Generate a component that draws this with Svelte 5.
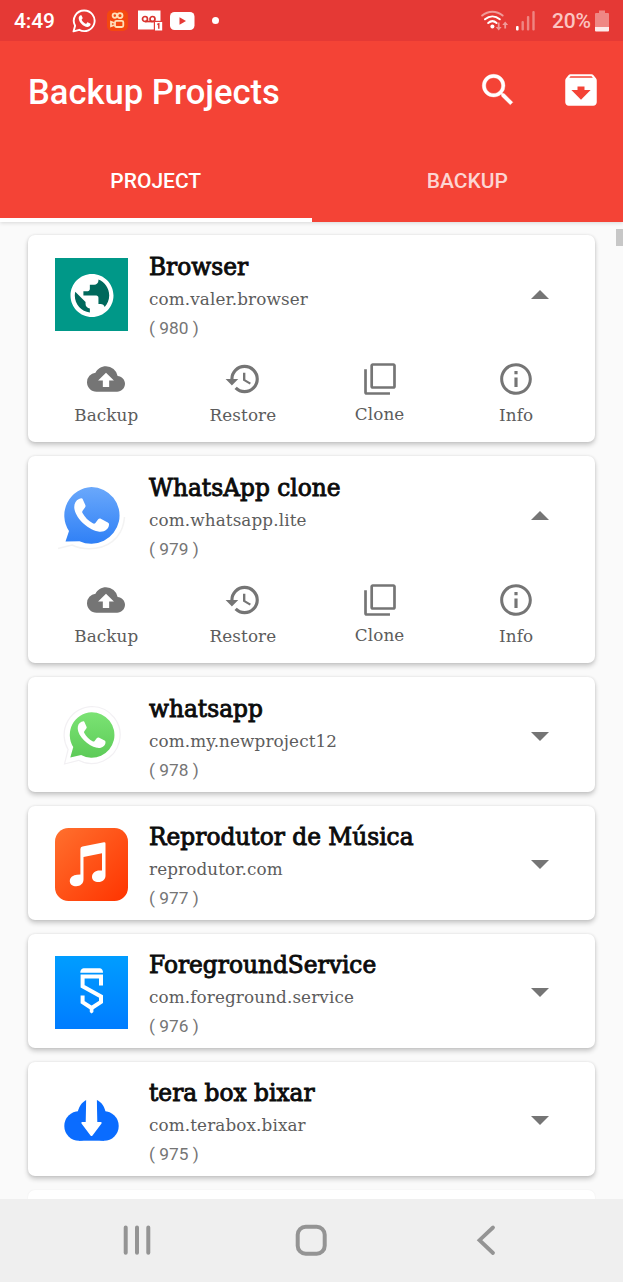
<!--
  App.svelte - Backup Projects screen with the project list
-->
<script lang="ts">
  interface Project {
    id: number;
    name: string;
    pkg: string;
    icon: string;
    open: boolean;
  }

  let projects = $state<Project[]>([
    { id: 980, name: "Browser", pkg: "com.valer.browser", icon: "browser", open: true },
    { id: 979, name: "WhatsApp clone", pkg: "com.whatsapp.lite", icon: "chat-blue", open: true },
    { id: 978, name: "whatsapp", pkg: "com.my.newproject12", icon: "chat-green", open: false },
    { id: 977, name: "Reprodutor de Música", pkg: "reprodutor.com", icon: "music", open: false },
    { id: 976, name: "ForegroundService", pkg: "com.foreground.service", icon: "sketch", open: false },
    { id: 975, name: "tera box bixar", pkg: "com.terabox.bixar", icon: "tera", open: false },
  ]);

  const actions = [
    {
      label: "Backup",
      path: "M19.35 10.04A7.49 7.49 0 0 0 12 4C9.11 4 6.6 5.64 5.35 8.04A5.994 5.994 0 0 0 0 14c0 3.31 2.69 6 6 6h13c2.76 0 5-2.24 5-5 0-2.64-2.05-4.78-4.65-4.96zM14 13v4h-4v-4H7l5-5 5 5h-3z",
    },
    {
      label: "Restore",
      path: "M13 3a9 9 0 0 0-9 9H1l3.89 3.89.07.14L9 12H6c0-3.87 3.13-7 7-7s7 3.13 7 7-3.13 7-7 7c-1.93 0-3.68-.79-4.94-2.06l-1.42 1.42A8.954 8.954 0 0 0 13 21a9 9 0 0 0 0-18zm-1 5v5l4.28 2.54.72-1.21-3.5-2.08V8H12z",
    },
    {
      label: "Clone",
      path: "M3.700 5.800H2V20.500c0 .9.7 1.500 1.500 1.500H18.300v-1.700H3.700zM20.500 2H7.400c-.8 0-1.500.7-1.500 1.500v13.200c0 .8.7 1.500 1.500 1.500h13.100c.8 0 1.500-.7 1.500-1.500V3.500c0-.8-.7-1.500-1.500-1.500zm-.2 14.500H7.600V3.700h12.700z",
    },
    {
      label: "Info",
      path: "M11 7h2v2h-2zm0 4h2v6h-2zm1-9C6.480 2 2 6.480 2 12s4.480 10 10 10 10-4.480 10-10S17.520 2 12 2zm0 18.100c-4.500 0-8.100-3.600-8.100-8.100S7.500 3.900 12 3.900s8.100 3.600 8.100 8.100-3.600 8.100-8.100 8.100z",
    },
  ];

  const tabs = ["PROJECT", "BACKUP"];
  let activeTab = $state("PROJECT");
</script>

{#snippet handset()}
  <path
    fill="#fff"
    d="M24 20c-3.500 1.500-5 5-4.700 9 .8 9 12 21 24 23.500 6 1.100 10.700-2.500 10.700-7 0-1-.3-1.500-1.200-2l-6.600-3.500c-1.400-.7-2.300-.5-3.200.6l-2.600 3.300c-.8.900-1.500 1-2.600.4-4.200-2.200-8-6-10.300-10.300-.5-1-.4-1.700.3-2.500l2.200-3c.6-.9.700-1.500.3-2.400l-2.800-6.300c-.6-1.100-2-.500-3.500.2z"
  />
{/snippet}

{#snippet appIcon(name: string)}
  <svg class="app-icon" viewBox="0 0 73 73">
    {#if name === "browser"}
      <rect width="73" height="73" fill="#009888" />
      <circle cx="37" cy="37.500" r="20" fill="#00695c" />
      <g transform="translate(11.200 11.700) scale(2.150)">
        <path
          fill="#fff"
          d="M12 2C6.480 2 2 6.480 2 12s4.480 10 10 10 10-4.480 10-10S17.520 2 12 2zm-1 17.930c-3.950-.490-7-3.850-7-7.930 0-.620.080-1.210.210-1.790L9 15v1c0 1.100.9 2 2 2v1.930zm6.900-2.540c-.260-.810-1-1.390-1.900-1.390h-1v-3c0-.550-.450-1-1-1H8v-2h2c.550 0 1-.450 1-1V7h2c1.100 0 2-.9 2-2v-.410c2.930 1.190 5 4.060 5 7.410 0 2.080-.8 3.970-2.100 5.390z"
        />
      </g>
    {:else if name === "chat-blue"}
      <defs>
        <linearGradient id="blue" x1="0" y1="0" x2="0" y2="1">
          <stop offset="0" stop-color="#6aa8fb" />
          <stop offset="1" stop-color="#2f80f6" />
        </linearGradient>
      </defs>
      <path fill="none" stroke="#f3f3f3" stroke-width="1.500" d="M3 69.500 17 66c14 6.500 34 5 45-8 4-5 7-12 7.500-20" />
      <path fill="url(#blue)" d="M36.500 8A28.400 28.400 0 1 1 24.500 62.300L10.500 62.500l3.500-10.500A28.400 28.400 0 0 1 36.500 8z" />
      {@render handset()}
    {:else if name === "chat-green"}
      <defs>
        <linearGradient id="green" x1="0" y1="0" x2="0" y2="1">
          <stop offset="0" stop-color="#7be374" />
          <stop offset="1" stop-color="#5dcb58" />
        </linearGradient>
      </defs>
      <path
        fill="#fff"
        stroke="#f2f0f3"
        stroke-width="1.200"
        d="M37 6.500a28.500 28.500 0 1 1-13.500 53.800L9.500 64l3.600-14.500A28.500 28.500 0 0 1 37 6.500z"
      />
      <g transform="translate(7.300 5.800) scale(.8)">
        <path fill="url(#green)" d="M36.500 8A28.400 28.400 0 1 1 23.500 61.500L10 64.500l3.700-13A28.400 28.400 0 0 1 36.500 8z" />
        {@render handset()}
      </g>
    {:else if name === "music"}
      <defs>
        <linearGradient id="orange" x1="0" y1="0" x2="1" y2="1">
          <stop offset="0" stop-color="#ff702e" />
          <stop offset="1" stop-color="#ff3400" />
        </linearGradient>
      </defs>
      <rect width="73" height="73" rx="13.500" fill="url(#orange)" />
      <path
        fill="#fff"
        d="M27.500 18.600 49 14.300q1.500-.2 1.500 1.300V47.500c0 4-3 6.500-7 6.500-3.800 0-6.500-2-6.500-5 0-4 3.500-6.500 7.500-6.500H47V25.300L28.500 29v22.500c0 4-3.200 6.700-7.200 6.700-3.700 0-6.500-2-6.500-5 0-4 3.500-6.200 7.200-6.500l3.400-.2V21q0-2 2.100-2.400z"
      />
    {:else if name === "sketch"}
      <defs>
        <linearGradient id="azure" x1="0" y1="0" x2="0" y2="1">
          <stop offset="0" stop-color="#009dff" />
          <stop offset="1" stop-color="#007cff" />
        </linearGradient>
      </defs>
      <rect width="73" height="73" fill="url(#azure)" />
      <path fill="#fff" d="M28.500 12.300h16.500q3 .8 3 4.400H25.300q0-3.600 3.200-4.400zM34.800 51.500h3.600V56l-1.800 1.500-1.800-1.500z" />
      <path fill="none" stroke="#fff" stroke-width="4" d="M46 29.500v-9H27.600v9.800L46 40.500v5.500l-9.400 6-9-5.800v-6.700" />
    {:else}
      <g fill="#0a6cff">
        <circle cx="24" cy="42" r="14.700" />
        <circle cx="49" cy="42" r="14.700" />
        <path d="M24 35h25v21.700H24z" />
        <path d="M22 31c1.500-8.500 5-13 9.700-15.300v20L22 38zM41.500 15.700C46.500 18 50 22.500 51.300 31v7l-9.800-2.300z" />
      </g>
      <path fill="#fff" d="M31.200 15h10.600l.5 23h3.500q1.500.3.7 1.600l-9 12q-1 1-2 0l-9-12q-.8-1.300.7-1.600h3.500z" />
    {/if}
  </svg>
{/snippet}

<div class="screen">
  <header class="app-bar">
    <div class="status-bar">
      <span class="time">4:49</span>
      <div class="status-left">
        <svg width="24" height="24" viewBox="0 0 24 24">
          <path
            fill="none"
            stroke="#fff"
            stroke-width="1.900"
            stroke-linejoin="round"
            d="M12.300 1.500a10.300 10.300 0 1 1-5 19.300L1.500 22.400l1.600-5.600A10.300 10.300 0 0 1 12.300 1.500z"
          />
          <path
            fill="#fff"
            d="M8.500 6.300c.4-.2 1-.1 1.200.4l.9 2.100c.1.400 0 .6-.2.900l-.8 1c1 2 2.500 3.400 4.500 4.200l1.100-1.300c.3-.3.5-.3.900-.200l2.100 1c.5.300.5.600.4 1.100-.4 1.600-1.700 2.400-3.200 2.400-4.200-.4-8.300-4.500-8.700-8.500 0-1.400.7-2.600 1.800-3.100z"
          />
        </svg>
        <svg width="21" height="21" viewBox="0 0 21 21">
          <rect width="21" height="21" rx="5" fill="#f4480f" />
          <g fill="none" stroke="#ffe0b8" stroke-width="1.800">
            <circle cx="7.800" cy="5.600" r="2.200" />
            <circle cx="13" cy="5.600" r="2.500" />
            <rect x="8" y="10.800" width="8.300" height="6.200" rx="1.500" />
            <path d="M7.500 13 4 11.800v4.400L7.500 15" />
          </g>
        </svg>
        <svg width="25" height="21" viewBox="0 0 25 21">
          <path fill="#fff" d="M0 .5h22.500v19H0z" />
          <g fill="none" stroke="#d9342f" stroke-width="1.700">
            <circle cx="7" cy="9" r="2.500" />
            <circle cx="14.500" cy="9" r="2.500" />
            <path d="M7 11.500h8.500" />
          </g>
          <path fill="#e53935" d="M15.800 10.800H25V21h-9.200z" />
          <path fill="#fff" d="M17 12h7.200v8.500H17z" />
          <path fill="none" stroke="#d9342f" stroke-width="1.400" d="m19.300 14.500 1.500-.7v5" />
        </svg>
        <svg width="25" height="18" viewBox="0 0 25 18">
          <rect width="24.500" height="18" rx="4.500" fill="#fff" />
          <path fill="#e53935" d="m9.500 5.300 6.500 3.700-6.500 3.700z" />
        </svg>
        <span class="dot"></span>
      </div>
      <div class="status-right">
        <svg width="28" height="22" viewBox="0 0 28 22">
          <g fill="none" stroke-width="2" stroke-linecap="round">
            <path stroke="#f09a98" d="M1.200 5.500c6-5 14.400-5 20.400 0" />
            <path stroke="#fff" d="M4 9.300c4.500-3.800 10.300-3.800 14.800 0M7.200 13c2.500-2.200 5.900-2.200 8.400 0" />
          </g>
          <circle cx="11.400" cy="16.500" r="2" fill="#fff" />
          <path fill="#f09a98" d="M16.800 12.500h1.800V17h2l-2.900 3.500L14.800 17h2zM23.300 18.500h1.800V15h2l-2.900-3.500-2.900 3.500h2z" />
        </svg>
        <svg class="signal" width="20" height="21" viewBox="0 0 20 21">
          <rect y="16" width="2.600" height="4.500" rx="1" fill="#fff" />
          <g fill="#ef8582">
            <rect x="5.500" y="11" width="2.400" height="9.500" rx="1" />
            <rect x="10.900" y="6" width="2.400" height="14.500" rx="1" />
            <rect x="16.300" y="1" width="2.400" height="19.500" rx="1" />
          </g>
        </svg>
        <span class="percent">20%</span>
        <svg width="14" height="22" viewBox="0 0 14 22">
          <path fill="#ef8784" d="M4 .5h6V3h3q1 0 1 1v13H0V4q0-1 1-1h3z" />
          <path fill="#fff" fill-opacity=".9" d="M0 17h14v3.500q0 1-1 1H1q-1 0-1-1z" />
        </svg>
      </div>
    </div>

    <div class="toolbar">
      <h1>Backup Projects</h1>
      <svg width="42" height="42" viewBox="0 0 24 24">
        <path
          fill="#fff"
          stroke="#fff"
          stroke-width=".2"
          d="M15.500 14h-.790l-.280-.270A6.471 6.471 0 0 0 16 9.500 6.500 6.500 0 1 0 9.500 16c1.610 0 3.090-.590 4.230-1.570l.270.280v.790l5 4.990L20.490 19l-4.990-5zm-6 0C7.010 14 5 11.990 5 9.500S7.010 5 9.500 5 14 7.010 14 9.500 11.990 14 9.500 14z"
        />
      </svg>
      <svg width="42" height="42" viewBox="0 0 24 24">
        <path
          fill="#fff"
          fill-rule="evenodd"
          d="M20.540 5.230 19.150 3.550A1.450 1.450 0 0 0 18 3H6c-.470 0-.880.210-1.160.550L3.460 5.230C3.170 5.570 3 6.020 3 6.500V19c0 1.100.9 2 2 2h14c1.100 0 2-.9 2-2V6.500c0-.480-.170-.930-.460-1.270zM12 17.500 6.500 12H10V10h4v2h3.500L12 17.500zM5.300 5l.7-.9h12l.8.9H5.300z"
        />
      </svg>
    </div>

    <nav class="tabs">
      {#each tabs as tab}
        <button class="tab" class:active={activeTab === tab} onclick={() => (activeTab = tab)}>
          {tab}
        </button>
      {/each}
    </nav>
  </header>

  <main class="list">
    {#each projects as project (project.id)}
      <article class="card">
        <div class="card-head">
          {@render appIcon(project.icon)}
          <div class="info">
            <h2>{project.name}</h2>
            <p class="pkg">{project.pkg}</p>
            <p class="number">( {project.id} )</p>
          </div>
          <button class="toggle" aria-label="Toggle" onclick={() => (project.open = !project.open)}>
            <svg width="18" height="9" viewBox="0 0 18 9">
              <path fill="#757575" d={project.open ? "M0 9 9 0l9 9z" : "M0 0h18L9 9z"} />
            </svg>
          </button>
        </div>

        {#if project.open}
          <div class="actions">
            {#each actions as action}
              <button class="action" class:clone={action.label === "Clone"}>
                <svg width="38" height="38" viewBox="0 0 24 24">
                  <path fill="#757575" d={action.path} />
                </svg>
                <span>{action.label}</span>
              </button>
            {/each}
          </div>
        {/if}
      </article>
    {/each}
    <article class="card next"></article>
    <span class="scroll-thumb"></span>
  </main>

  <footer class="nav-bar">
    <svg width="34" height="34" viewBox="0 0 34 34">
      <path stroke="#949494" stroke-width="4" stroke-linecap="round" d="M5.700 4.500v25.300M17 4.500v25.300M28.300 4.500v25.300" />
    </svg>
    <svg width="34" height="34" viewBox="0 0 34 34">
      <rect x="3.700" y="3.700" width="27" height="27" rx="8" fill="none" stroke="#949494" stroke-width="4" />
    </svg>
    <svg width="34" height="34" viewBox="0 0 34 34">
      <path fill="none" stroke="#949494" stroke-width="3.800" stroke-linecap="round" d="M24 4.500 10.500 17.200 24 30" />
    </svg>
  </footer>
</div>

<style>
  :global(body) {
    margin: 0;
  }

  .screen {
    display: flex;
    flex-direction: column;
    width: 623px;
    height: 1282px;
    overflow: hidden;
    background: #fafafa;
    font-family: Roboto, sans-serif;
  }

  h1,
  h2,
  p {
    margin: 0;
  }

  svg {
    display: block;
    flex: none;
  }

  button {
    padding: 0;
    border: none;
    background: none;
    font: inherit;
  }

  .app-bar {
    flex: none;
    z-index: 1;
    height: 222px;
    background: #f44336;
    box-shadow: 0 1px 4px rgba(0, 0, 0, 0.14);
  }

  /* Status bar */
  .status-bar {
    display: flex;
    align-items: center;
    box-sizing: border-box;
    height: 41px;
    padding: 0 14px;
    background: #e53935;
    color: #fff;
    font-size: 21px;
    font-weight: 500;
  }

  .time {
    width: 58px;
    padding-top: 1px;
    letter-spacing: -0.1px;
  }

  .status-left {
    display: flex;
    align-items: center;
  }

  .status-left svg:nth-child(2) {
    margin-left: 11px;
  }

  .status-left svg:nth-child(3) {
    margin-left: 10px;
  }

  .status-left svg:nth-child(4) {
    margin-left: 7px;
  }

  .dot {
    width: 7px;
    height: 7px;
    margin-left: 17px;
    border-radius: 50%;
    background: #fff;
  }

  .status-right {
    display: flex;
    align-items: center;
    margin-left: auto;
  }

  .signal {
    margin-left: 7px;
  }

  .percent {
    width: 43px;
    margin-left: 16px;
    padding-top: 1px;
    color: #fbc4c1;
    font-weight: 500;
    letter-spacing: -0.2px;
  }

  /* Toolbar */
  .toolbar {
    display: flex;
    align-items: center;
    height: 98px;
    padding: 0 20.700px 0 28px;
  }

  h1 {
    flex: 1;
    padding-top: 4px;
    color: #fff;
    font-size: 34.600px;
    font-weight: 500;
  }

  .toolbar svg + svg {
    margin-left: 41.500px;
  }

  .tabs {
    display: flex;
    height: 83px;
  }

  .tab {
    flex: 1;
    border-top: 4px solid transparent;
    border-bottom: 4px solid transparent;
    color: rgba(255, 255, 255, 0.78);
    font-size: 21px;
    font-weight: 500;
  }

  .tab.active {
    border-bottom-color: #fff;
    color: #fff;
  }

  /* Project list */
  .list {
    position: relative;
    display: flex;
    flex: 1;
    flex-direction: column;
    gap: 14px;
    min-height: 0;
    padding: 13.400px 28px 0 27.500px;
    overflow: hidden;
  }

  .card {
    flex: none;
    border-radius: 7px;
    background: #fff;
    box-shadow:
      0 3px 5px rgba(0, 0, 0, 0.2),
      0 0 3px rgba(0, 0, 0, 0.1);
  }

  .card.next {
    height: 60px;
    box-shadow: 0 0 2px rgba(0, 0, 0, 0.06);
  }

  .card-head {
    display: flex;
    box-sizing: border-box;
    height: 114.200px;
    padding: 15.500px 46px 0 27.500px;
  }

  .app-icon {
    width: 73px;
    height: 73px;
    margin-top: 7px;
  }

  .info {
    flex: 1;
    margin-left: 21px;
  }

  /* The title is the regular weight, thickened with a stroke */
  h2 {
    color: #0c0c0c;
    font-family: "DejaVu Serif", serif;
    font-size: 23.300px;
    font-weight: 400;
    line-height: 32px;
    white-space: nowrap;
    -webkit-text-stroke: 0.9px #0c0c0c;
  }

  .pkg {
    color: #5c5c5c;
    font-family: "DejaVu Serif", serif;
    font-size: 16.800px;
    letter-spacing: 0.120px;
    line-height: 32px;
  }

  .number {
    color: #757575;
    font-size: 17.300px;
    line-height: 27px;
  }

  .toggle {
    display: flex;
    align-self: flex-start;
    margin-top: 39px;
  }

  /* Card actions */
  .actions {
    display: grid;
    grid-template-columns: repeat(4, 1fr);
    height: 92.800px;
    padding: 0 10.500px;
  }

  .action {
    display: flex;
    flex-direction: column;
    align-items: center;
    gap: 4.500px;
    padding-top: 10.300px;
    color: #5c5c5c;
    font-family: "DejaVu Serif", serif;
    font-size: 16.800px;
    letter-spacing: 0.100px;
    line-height: 26px;
  }

  .action.clone {
    gap: 3px;
  }

  .scroll-thumb {
    position: absolute;
    top: 7px;
    right: 0;
    width: 7px;
    height: 17px;
    background: #c7c7c7;
  }

  /* System navigation */
  .nav-bar {
    display: grid;
    flex: none;
    grid-template-columns: repeat(3, 1fr);
    align-items: center;
    justify-items: center;
    box-sizing: border-box;
    height: 83px;
    padding: 0 50px 1px;
    background: #efefef;
  }
</style>
